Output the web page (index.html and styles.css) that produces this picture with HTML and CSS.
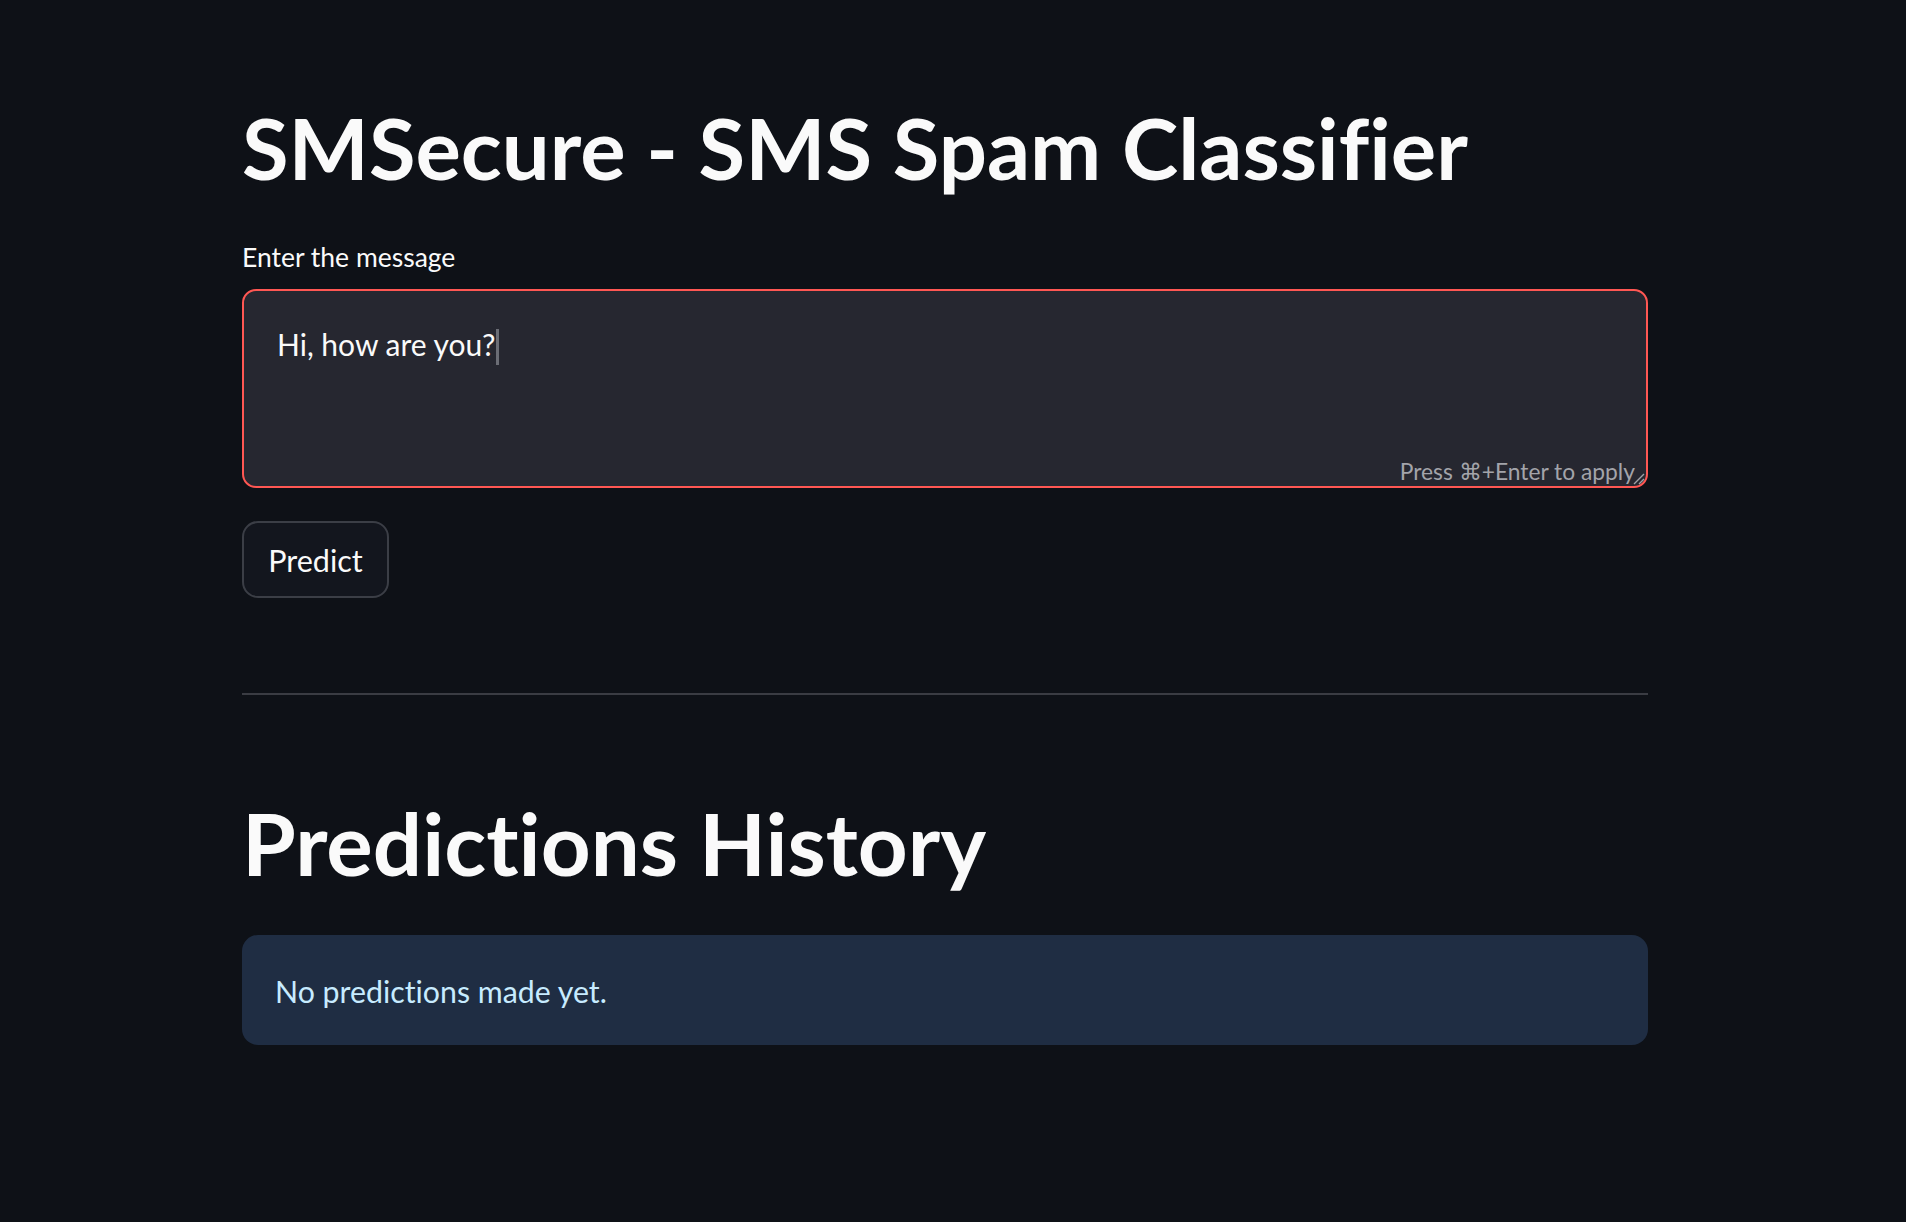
FILE: index.html
```html
<!DOCTYPE html>
<html lang="en">
<head>
<meta charset="utf-8">
<title>SMSecure - SMS Spam Classifier</title>
<link rel="stylesheet" href="styles.css">
</head>
<body>
<main class="page">
  <h1 class="title">SMSecure - SMS Spam Classifier</h1>
  <label class="label">Enter the message</label>
  <div class="textarea">
    <div class="ta-text">Hi, how are you?<span class="caret"></span></div>
    <div class="ta-hint">Press ⌘+Enter to apply</div>
    <svg class="resize" width="14" height="14" viewBox="0 0 14 14"><path d="M13 3 L3 13 M13 8 L8 13" stroke="#a0a2a8" stroke-width="1.4" fill="none"/></svg>
  </div>
  <button class="btn">Predict</button>
  <hr class="divider">
  <h1 class="title history">Predictions History</h1>
  <div class="info">No predictions made yet.</div>
</main>
</body>
</html>
```
FILE: styles.css
```css
html, body {
  margin: 0;
  padding: 0;
  background: #0e1117;
}
body {
  font-family: "Source Sans Pro", Lato, "Noto Sans", sans-serif;
  font-variant-ligatures: none;
  color: #fafafa;
  width: 1906px;
  height: 1222px;
  overflow: hidden;
}
.page {
  width: 1406px;
  margin-left: 242px;
  padding-top: 97px;
  display: flex;
  flex-direction: column;
  align-items: flex-start;
}
.title {
  margin: 0;
  font-size: 85px;
  line-height: 100px;
  font-weight: 700;
  color: #fafafa;
  letter-spacing: 0;
  font-variant-ligatures: none;
}
.label {
  margin-top: 44px;
  font-size: 26.5px;
  line-height: 32px;
  color: #fafafa;
}
.textarea {
  position: relative;
  box-sizing: border-box;
  margin-top: 16px;
  width: 1406px;
  height: 199px;
  background: #262730;
  border: 2px solid #ff5753;
  border-radius: 14px;
  padding: 33px 33px;
}
.ta-text {
  font-size: 30px;
  line-height: 40px;
  color: #fafafa;
}
.caret {
  display: inline-block;
  width: 3px;
  height: 36px;
  background: #6b6d75;
  vertical-align: -9px;
  margin-left: 1px;
}
.ta-hint {
  position: absolute;
  right: 11px;
  bottom: 1px;
  font-size: 22.8px;
  line-height: 28px;
  color: #a3a4aa;
}
.resize {
  position: absolute;
  right: 1px;
  bottom: 1px;
}
.btn {
  margin-top: 33px;
  box-sizing: border-box;
  width: 147px;
  height: 77px;
  background: #13161e;
  border: 2px solid #3b3e46;
  border-radius: 16px;
  color: #fafafa;
  font-family: inherit;
  font-size: 30.5px;
  padding: 0;
}
.divider {
  align-self: stretch;
  margin: 95px 0 0 0;
  border: 0;
  height: 2px;
  background: #3a3c43;
}
.history {
  margin-top: 98px;
  font-size: 87px;
}
.info {
  margin-top: 42px;
  box-sizing: border-box;
  width: 1406px;
  height: 110px;
  background: #1f2d43;
  border-radius: 16px;
  padding: 2px 33px 0;
  display: flex;
  align-items: center;
  font-size: 30.3px;
  color: #c7ebff;
}
```
